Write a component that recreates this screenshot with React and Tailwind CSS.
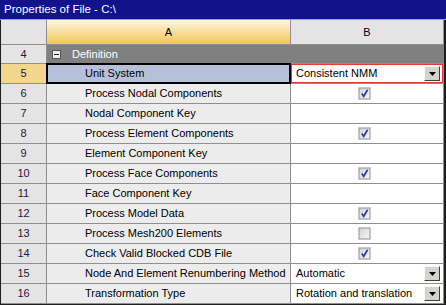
import React from "react";

const rows = [
  { n: 6, label: "Process Nodal Components", type: "check", on: true },
  { n: 7, label: "Nodal Component Key", type: "empty" },
  { n: 8, label: "Process Element Components", type: "check", on: true },
  { n: 9, label: "Element Component Key", type: "empty" },
  { n: 10, label: "Process Face Components", type: "check", on: true },
  { n: 11, label: "Face Component Key", type: "empty" },
  { n: 12, label: "Process Model Data", type: "check", on: true },
  { n: 13, label: "Process Mesh200 Elements", type: "check", on: false },
  { n: 14, label: "Check Valid Blocked CDB File", type: "check", on: true },
  { n: 15, label: "Node And Element Renumbering Method", type: "drop", value: "Automatic" },
  { n: 16, label: "Transformation Type", type: "drop", value: "Rotation and translation" },
];

const CheckBox = ({ on }) => (
  <svg width="13" height="13" viewBox="0 0 13 13">
    <defs>
      <linearGradient id="cbg" x1="0" y1="0" x2="1" y2="1">
        <stop offset="0" stopColor="#d4d4d4" />
        <stop offset="1" stopColor="#f6f6f6" />
      </linearGradient>
    </defs>
    <rect x="0.5" y="0.5" width="12" height="12" fill="#8e8f8f" />
    <rect x="1.5" y="1.5" width="10" height="10" fill="url(#cbg)" />
    {on && <path d="M3.8 6.6 L5.7 9.4 L9.6 2.8" fill="none" stroke="#2b3ea6" strokeWidth="1.8" />}
  </svg>
);

const DropButton = () => (
  <div className="w-[16px] h-[15px] bg-[#d6d3ce] border border-t-white border-l-white border-b-[#404040] border-r-[#404040] flex items-center justify-center">
    <svg width="7" height="4" viewBox="0 0 7 4">
      <path d="M0 0 H7 L3.5 4 Z" fill="#000" />
    </svg>
  </div>
);

const Drop = ({ value }) => (
  <div className="flex items-center h-full pl-[5px] pr-[3px]">
    <span className="flex-1 truncate">{value}</span>
    <DropButton />
  </div>
);

const NumCell = ({ n, className = "bg-[#e4e4e4]" }) => (
  <div className={`w-[46px] shrink-0 border-r border-[#8f8f8f] flex items-center justify-center text-[#1a1a40] ${className}`}>
    {n}
  </div>
);

const App = () => {
  return (
    <div
      className="w-[446px] h-[305px] bg-[#1e1e1e] flex flex-col overflow-hidden text-[11px] text-black"
      style={{ fontFamily: '"Liberation Sans", Arial, sans-serif' }}
    >
      <div className="h-[19px] shrink-0 bg-[#12128b] text-white text-[11.5px] leading-[19px] pl-[4px]">
        Properties of File - C:\
      </div>
      <div className="h-px shrink-0 bg-[#9aa0c0]" />

      <div className="flex-1 flex flex-col pl-px pr-[2px] pb-px">
        {/* header */}
        <div className="h-[25px] shrink-0 flex border-b border-[#8f8f8f]">
          <NumCell n="" />
          <div className="w-[244px] shrink-0 border-r border-[#8f8f8f] bg-gradient-to-b from-[#fdf6e0] to-[#f3c64d] flex items-center justify-center">
            A
          </div>
          <div className="flex-1 bg-[#e4e4e4] border-r border-[#8f8f8f] flex items-center justify-center">B</div>
        </div>

        {/* group row */}
        <div className="h-[19px] shrink-0 flex border-b border-[#8f8f8f]">
          <NumCell n={4} />
          <div className="flex-1 bg-[#808080] flex items-center pl-[5px] gap-[11px] text-white">
            <div className="w-[9px] h-[9px] bg-[#f0f0f0] border border-[#555] flex items-center justify-center">
              <div className="w-[5px] h-px bg-[#202020]" />
            </div>
            <span>Definition</span>
          </div>
        </div>

        {/* selected row */}
        <div className="h-[20px] shrink-0 flex border-b border-[#8f8f8f]">
          <NumCell n={5} className="bg-[#f3d68e]" />
          <div className="relative w-[244px] shrink-0 border-r border-[#8f8f8f] bg-[#b6c0d9] flex items-center pl-[38px]">
            Unit System
            <div className="absolute -top-px -left-px -right-px -bottom-px border-2 border-black" />
          </div>
          <div className="flex-1 bg-white border-r border-[#8f8f8f]">
            <div className="h-full border border-[#e83838]">
              <div className="flex items-center h-full pl-[4px] pr-[2px]">
                <span className="flex-1 truncate">Consistent NMM</span>
                <DropButton />
              </div>
            </div>
          </div>
        </div>

        {rows.map((r) => (
          <div key={r.n} className="h-[20px] shrink-0 flex border-b border-[#8f8f8f]">
            <NumCell n={r.n} />
            <div className="w-[244px] shrink-0 border-r border-[#8f8f8f] bg-[#ececec] flex items-center pl-[38px] whitespace-nowrap">
              {r.label}
            </div>
            <div className="flex-1 bg-white border-r border-[#8f8f8f]">
              {r.type === "check" && (
                <div className="h-full flex items-center justify-center pr-[5px]">
                  <CheckBox on={r.on} />
                </div>
              )}
              {r.type === "drop" && <Drop value={r.value} />}
            </div>
          </div>
        ))}
      </div>
    </div>
  );
};

export default App;
